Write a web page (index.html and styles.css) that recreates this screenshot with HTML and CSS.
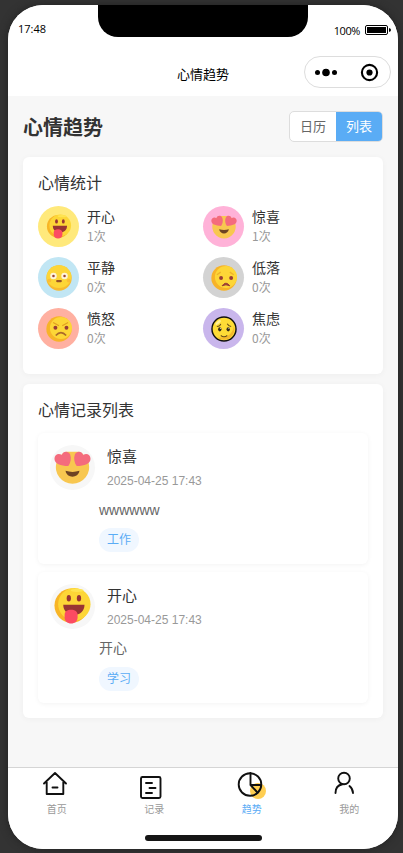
FILE: index.html
```html
<!DOCTYPE html>
<html lang="zh-CN">
<head>
<meta charset="utf-8">
<title>心情趋势</title>
<link rel="stylesheet" href="styles.css">
</head>
<body>
<svg class="defs" aria-hidden="true">
  <symbol id="happy" viewBox="0 0 40 42">
    <circle cx="19" cy="20" r="18.500" fill="#f8b526"/>
    <circle cx="22" cy="18.500" r="17.500" fill="#fdd637"/>
    <ellipse cx="25" cy="3.500" rx="7" ry="1.800" fill="#ffe451"/>
    <ellipse cx="16" cy="12" rx="2.300" ry="3.500" fill="#993533"/>
    <ellipse cx="27" cy="12" rx="2.300" ry="3.500" fill="#993533"/>
    <path d="M10 19h23c0 7-5 11-11.500 11S10 26 10 19z" fill="#993533"/>
    <path d="M11.500 30c0-4 3-5.500 7-5.500s7 2 7 5.500v3c0 4-3 6.500-7 6.500s-7-2.500-7-6.500z" fill="#fc4b62"/>
  </symbol>
  <symbol id="love" viewBox="0 0 40 40">
    <path d="M13 3h14A18 18 0 1 1 13 3z" fill="#f8c750"/>
    <path d="M15.500 18.500C7 18 .5 16 .5 10.500.5 6 5 4 8.500 6.500 9.500 2 15.500 1.500 17.500 6c1.500 4 .5 9-2 12.500z" fill="#f46b7d"/>
    <path d="M24.500 18.500c8.500-.5 15-2.500 15-8 0-4.500-4.500-6.500-8-4C30.500 2 24.500 1.500 22.500 6c-1.500 4-.5 9 2 12.500z" fill="#f46b7d"/>
    <path d="M12.500 23.500q7.500 2.500 15 0c-1 8.500-14 8.500-15 0z" fill="#6d4323"/>
  </symbol>
  <symbol id="calm" viewBox="0 0 40 40">
    <circle cx="20" cy="20" r="19.500" fill="#f7ba2f"/>
    <ellipse cx="20" cy="18" rx="19" ry="17.500" fill="#fdd637"/>
    <circle cx="11.500" cy="17" r="5" fill="#fff5dc"/>
    <circle cx="28.500" cy="17" r="5" fill="#fff5dc"/>
    <circle cx="11.500" cy="17" r="2" fill="#984438"/>
    <circle cx="28.500" cy="17" r="2" fill="#984438"/>
    <circle cx="5" cy="24" r="3" fill="#fbbd35"/><circle cx="35" cy="24" r="3" fill="#fbbd35"/>
    <rect x="15.500" y="23" width="9" height="3.500" rx="1.700" fill="#97532a"/>
  </symbol>
  <symbol id="low" viewBox="0 0 40 40">
    <circle cx="20" cy="20" r="19.500" fill="#f7b328"/>
    <circle cx="23" cy="18.500" r="17" fill="#fdd637"/>
    <path d="M9 15l6-4m14 0 6 4" stroke="#efb22b" stroke-width="2" fill="none"/>
    <circle cx="15.500" cy="20" r="3" fill="#993c35"/><circle cx="31" cy="20" r="3" fill="#993c35"/>
    <path d="M17 32q6-8 12 0-6-3-12 0z" fill="#993c35" stroke="#993c35" stroke-width="1.500"/>
  </symbol>
  <symbol id="angry" viewBox="0 0 40 40">
    <circle cx="20" cy="20" r="19.500" fill="#f7b328"/>
    <circle cx="23" cy="18.500" r="17" fill="#fdd637"/>
    <path d="M11 10l9 5m14-5-9 5" stroke="#e2a022" stroke-width="2" fill="none"/>
    <circle cx="14.500" cy="18" r="3" fill="#993c35"/><circle cx="31.500" cy="18" r="3" fill="#993c35"/>
    <path d="M15 30q8-9 16 0" stroke="#aa692b" stroke-width="2.500" fill="none"/>
  </symbol>
  <symbol id="worry" viewBox="0 0 40 40">
    <circle cx="20" cy="20" r="18.500" fill="#fedc36" stroke="#111" stroke-width="2.200"/>
    <path d="M10 33a16 16 0 0 0 25-18c0 10-9 20-25 18z" fill="#f4b82b"/>
    <ellipse cx="11" cy="10" rx="5" ry="2" fill="#fff198" transform="rotate(-40 11 10)"/>
    <path d="M9 16q5 0 6-4m10 0q2 4 6 4M15 30q5 4 10 0" stroke="#684c19" stroke-width="1.600" fill="none"/>
    <ellipse cx="13.500" cy="20.500" rx="2.600" ry="3.300" fill="#342b1b"/><ellipse cx="26.500" cy="20.500" rx="2.600" ry="3.300" fill="#342b1b"/>
    <circle cx="14.500" cy="19" r=".8" fill="#fff"/><circle cx="27.500" cy="19" r=".8" fill="#fff"/>
  </symbol>
</svg>

<div class="phone">
  <header class="top">
    <div class="status">
      <span class="time">17:48</span>
      <span class="power"><span>100%</span>
        <svg width="26" height="10" viewBox="0 0 26 10"><rect x=".5" y=".5" width="22" height="9" rx="1.500" fill="none" stroke="#000"/><rect x="2" y="2" width="19" height="6" fill="#000"/><path d="M24 3q2 .5 2 2t-2 2z"/></svg>
      </span>
    </div>
    <div class="notch"></div>
    <div class="navbar">
      <span class="nav-title">心情趋势</span>
      <div class="capsule">
        <svg width="87" height="32" viewBox="0 0 87 32"><circle cx="13.500" cy="16.500" r="2.500"/><circle cx="22" cy="16.500" r="3.800"/><circle cx="30.500" cy="16.500" r="2.500"/><circle cx="65.500" cy="16.500" r="7.600" fill="none" stroke="#000" stroke-width="2.100"/><circle cx="65.500" cy="16.500" r="3.100"/></svg>
      </div>
    </div>
  </header>

  <main class="content">
    <div class="heading">
      <h1>心情趋势</h1>
      <div class="switch"><span>日历</span><span class="on">列表</span></div>
    </div>

    <section class="card stats">
      <h2>心情统计</h2>
      <div class="grid">
        <div class="stat"><div class="face yellow"><svg><use href="#happy"/></svg></div><div><b>开心</b><small>1次</small></div></div>
        <div class="stat"><div class="face pink"><svg><use href="#love"/></svg></div><div><b>惊喜</b><small>1次</small></div></div>
        <div class="stat"><div class="face blue"><svg><use href="#calm"/></svg></div><div><b>平静</b><small>0次</small></div></div>
        <div class="stat"><div class="face gray"><svg><use href="#low"/></svg></div><div><b>低落</b><small>0次</small></div></div>
        <div class="stat"><div class="face red"><svg><use href="#angry"/></svg></div><div><b>愤怒</b><small>0次</small></div></div>
        <div class="stat"><div class="face purple"><svg><use href="#worry"/></svg></div><div><b>焦虑</b><small>0次</small></div></div>
      </div>
    </section>

    <section class="card records">
      <h2>心情记录列表</h2>
      <article class="record">
        <div class="record-head"><div class="avatar"><svg><use href="#love"/></svg></div><div><b>惊喜</b><time>2025-04-25 17:43</time></div></div>
        <p>wwwwww</p>
        <span class="tag">工作</span>
      </article>
      <article class="record">
        <div class="record-head"><div class="avatar"><svg class="tall"><use href="#happy"/></svg></div><div><b>开心</b><time>2025-04-25 17:43</time></div></div>
        <p class="cjk">开心</p>
        <span class="tag">学习</span>
      </article>
    </section>
  </main>

  <footer class="bottom">
    <nav class="tabs">
      <div class="tab"><svg viewBox="0 0 30 30"><path d="M2 14.500 13 4l11 10.500M4.700 13v12h16.600V13M10.500 18.500h5"/></svg><span>首页</span></div>
      <div class="tab"><svg viewBox="0 0 30 30"><rect x="2" y="8" width="19.500" height="21" rx="1.500"/><path d="M7 14h6M10.500 19h6M7 24h6"/></svg><span>记录</span></div>
      <div class="tab on"><svg viewBox="0 0 30 30"><circle class="dot" cx="21" cy="22" r="8"/><circle cx="13" cy="15.500" r="11.300"/><path d="M13.500 4v12H24M13.500 16l7 7.500"/></svg><span>趋势</span></div>
      <div class="tab"><svg viewBox="0 0 30 30"><circle cx="10" cy="9.500" r="5.800"/><path d="M1.500 24c0-5 3-8 7-8.700M15.500 17c2 1.500 3.300 4 3.500 7"/></svg><span>我的</span></div>
    </nav>
    <div class="home-bar"></div>
  </footer>
</div>
</body>
</html>
```
FILE: styles.css
```css
* { box-sizing: border-box; }
body {
  margin: 0;
  height: 853px;
  padding: 5px 5px 4px 8px;
  overflow: hidden;
  background: #333;
  font-family: "Liberation Sans", "Noto Sans CJK SC", sans-serif;
  color: #333;
}
.defs { position: absolute; width: 0; height: 0; }
h1, h2, p { margin: 0; }
b { font-weight: 400; }
.phone {
  width: 390px;
  height: 844px;
  display: flex;
  flex-direction: column;
  overflow: hidden;
  border-radius: 35px;
  background: #f7f7f7;
  box-shadow: 0 0 8px #222;
}
.top { position: relative; height: 91px; flex: none; background: #fff; color: #000; }
.status {
  height: 47px;
  display: flex;
  align-items: flex-start;
  justify-content: space-between;
  padding: 16px 7px 0 10px;
  font: 11px/16px "Open Sans", sans-serif;
}
.power { display: flex; align-items: flex-start; gap: 5px; padding-top: 2px; letter-spacing: -.4px; }
.power svg { margin-top: 2px; }
.notch {
  position: absolute;
  top: 0;
  left: 90px;
  width: 210px;
  height: 32px;
  border-radius: 0 0 20px 20px;
  background: #000;
}
.navbar { position: relative; height: 44px; display: flex; justify-content: center; align-items: center; }
.nav-title { padding-top: 2px; font-size: 13px; line-height: 20px; }
.capsule {
  position: absolute;
  right: 7px;
  top: 4px;
  width: 87px;
  height: 32px;
  border: 1px solid #ddd;
  border-radius: 16px;
}
.capsule svg { display: block; margin: -1px; }
.content { flex: 1; padding: 15px; }
.heading { height: 31px; display: flex; justify-content: space-between; align-items: center; margin-bottom: 15px; }
h1 { padding-top: 2px; font-size: 20px; line-height: 30px; }
.switch {
  width: 94px;
  height: 31px;
  display: flex;
  overflow: hidden;
  border: 1px solid #ddd;
  border-radius: 5px;
  background: #fff;
  color: #666;
  font-size: 13px;
  line-height: 29px;
  text-align: center;
}
.switch span { flex: 1; }
.switch .on { background: #5aacf5; color: #fff; }
.card { padding: 15px; border-radius: 6px; background: #fff; box-shadow: 0 1px 6px rgba(0, 0, 0, .04); }
h2 { font-size: 16px; line-height: 24px; font-weight: 400; }
.stats { height: 217px; margin-bottom: 10px; }
.grid { display: grid; grid-template-columns: 1fr 1fr; row-gap: 10px; margin-top: 10px; }
.stat { display: flex; gap: 8px; height: 41px; }
.stat b { display: block; font-size: 14px; line-height: 22px; }
.stat small { display: block; margin-top: -1px; font: 12px/18px "Noto Sans CJK SC", sans-serif; color: #999; }
.face { width: 41px; height: 41px; display: grid; place-items: center; border-radius: 50%; }
.face svg { width: 26px; height: 26px; }
.yellow { background: #ffe97b; }
.pink { background: #ffb2d8; }
.blue { background: #c1e6f4; }
.gray { background: #d3d3d3; }
.red { background: #ffb0a1; }
.purple { background: #c9b6ec; }
.records { height: 334px; }
.record {
  height: 131px;
  margin: 10px 0 0;
  padding: 12px;
  border-radius: 6px;
  box-shadow: 0 1px 5px rgba(0, 0, 0, .05);
}
.record + .record { margin-top: 8px; }
.record-head { display: flex; gap: 12px; height: 45px; }
.avatar { width: 45px; height: 45px; display: grid; place-items: center; border-radius: 50%; background: #f7f7f7; }
.avatar svg { width: 37px; height: 37px; }
.avatar .tall { height: 39px; }
.record-head b { display: block; padding-top: 1px; font-size: 15px; line-height: 22px; }
.record-head time { display: block; margin-top: 4px; font-size: 12px; line-height: 18px; color: #999; }
.record p { height: 22px; margin: 9px 0 0 49px; font-size: 14px; line-height: 22px; color: #666; }
.record .cjk { line-height: 20px; }
.tag {
  display: block;
  width: 40px;
  height: 24px;
  margin: 7px 0 0 49px;
  border-radius: 12px;
  background: #f0f7ff;
  color: #5aacf5;
  font-size: 12px;
  line-height: 24px;
  text-align: center;
}
.bottom { height: 82px; flex: none; border-top: 1px solid #d5d5d5; background: #fff; }
.tabs { display: flex; height: 67px; }
.tab { flex: 1; display: flex; flex-direction: column; align-items: center; font-size: 10px; line-height: 15px; color: #999; }
.tab svg { width: 30px; height: 30px; margin-top: 1px; fill: none; stroke: #111; stroke-width: 1.900; stroke-linejoin: round; stroke-linecap: round; }
.tab span { margin-top: 3px; }
.tab.on { color: #5aacf5; }
.tab .dot { fill: #ffce51; stroke: none; }
.home-bar { width: 117px; height: 6px; margin: 0 auto; border-radius: 3px; background: #151515; }
```
